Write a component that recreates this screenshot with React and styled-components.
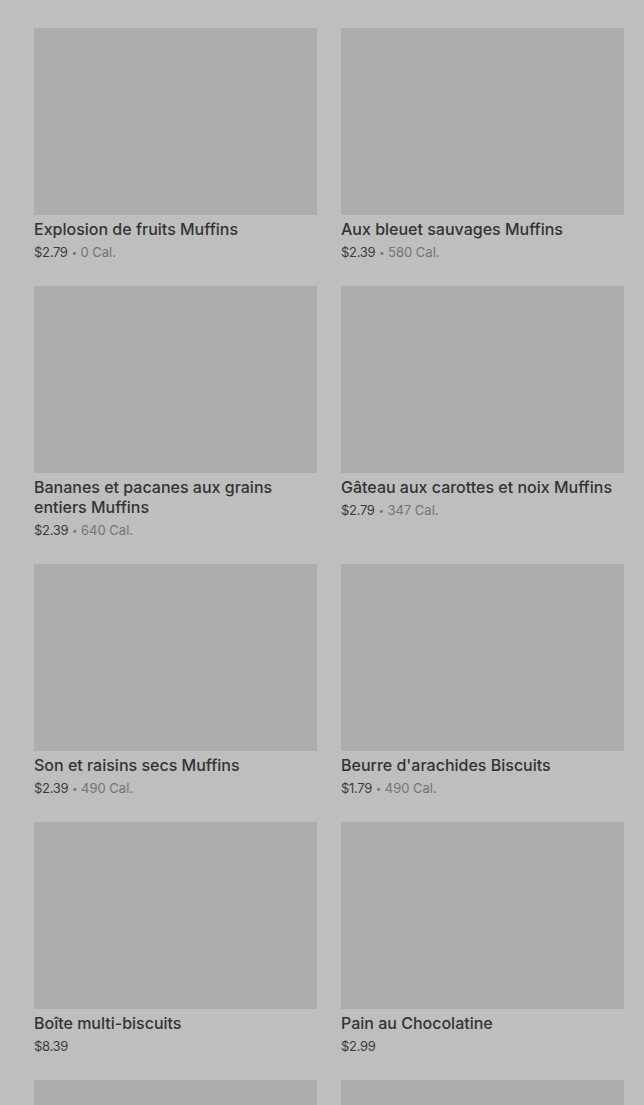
import React from "react";
import styled, { createGlobalStyle } from "styled-components";

const Global = createGlobalStyle`
  html, body { margin: 0; padding: 0; background: #bebebe; overflow: hidden; }
  body { font-family: Inter, Roboto, "Liberation Sans", sans-serif; }
`;

const Page = styled.div`
  padding: 0 20px 0 34px;
  background: #bebebe;
  height: 1105px;
  overflow: hidden;
`;

const Grid = styled.div`
  display: grid;
  grid-template-columns: 283px 283px;
  column-gap: 24px;
  row-gap: 24px;
  margin-top: -230px;
`;

const Card = styled.div`
  display: flex;
  flex-direction: column;
`;

const Thumb = styled.div`
  height: 187px;
  background: #adadad;
`;

const Title = styled.div`
  margin-top: 4px;
  font-size: 16px;
  font-weight: 500;
  line-height: 20px;
  color: #333333;
`;

const Meta = styled.div`
  margin-top: 3px;
  height: 20px;
  font-size: 13px;
  line-height: 20px;
  letter-spacing: -0.3px;
  color: #3c3c3c;
  white-space: nowrap;
`;

const Dot = styled.span`
  color: #727272;
  font-size: 9px;
  line-height: 1;
  margin: 0 4px;
  vertical-align: 1px;
`;

const Cal = styled.span`
  color: #747474;
  letter-spacing: 0;
`;

const items = [
  { title: "Muffins", price: "$2.39", cal: "600 Cal." },
  { title: "Muffins", price: "$2.79", cal: "490 Cal." },
  { title: "Explosion de fruits Muffins", price: "$2.79", cal: "0 Cal." },
  { title: "Aux bleuet sauvages Muffins", price: "$2.39", cal: "580 Cal." },
  { title: "Bananes et pacanes aux grains entiers Muffins", price: "$2.39", cal: "640 Cal." },
  { title: "Gâteau aux carottes et noix Muffins", price: "$2.79", cal: "347 Cal." },
  { title: "Son et raisins secs Muffins", price: "$2.39", cal: "490 Cal." },
  { title: "Beurre d'arachides Biscuits", price: "$1.79", cal: "490 Cal." },
  { title: "Boîte multi-biscuits", price: "$8.39" },
  { title: "Pain au Chocolatine", price: "$2.99" },
  { title: "Croissant", price: "$2.49" },
  { title: "Chausson aux pommes", price: "$2.49" },
];

export default function App() {
  return (
    <>
      <Global />
      <Page>
        <Grid>
          {items.map((it, i) => (
            <Card key={i}>
              <Thumb />
              <Title>{it.title}</Title>
              <Meta>
                {it.price}
                {it.cal && (
                  <>
                    <Dot>•</Dot>
                    <Cal>{it.cal}</Cal>
                  </>
                )}
              </Meta>
            </Card>
          ))}
        </Grid>
      </Page>
    </>
  );
}
